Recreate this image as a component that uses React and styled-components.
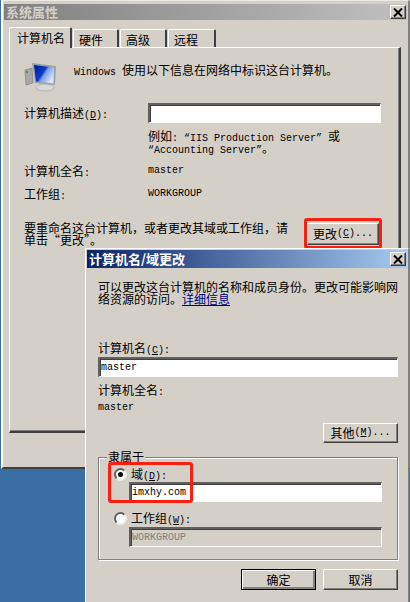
import React from 'react'
import styled, { createGlobalStyle } from 'styled-components'

const GlobalStyle = createGlobalStyle`
  html, body { margin: 0; padding: 0; background: #3a6ea5; }
  * { box-sizing: border-box; }
`

const Desktop = styled.div`
  position: relative;
  width: 410px;
  height: 602px;
  overflow: hidden;
  background: #3a6ea5;
  color: #000;
  font-family: "Noto Sans CJK SC", "Liberation Sans", sans-serif;
  font-size: 12px;
  line-height: 12px;
`

const Latin = styled.span`
  font-family: "Liberation Mono", monospace;
  font-size: 10px;
  line-height: 0;
  white-space: pre;
`

const SystemWindow = styled.div`
  position: absolute;
  left: 1px;
  top: 0;
  width: 409px;
  height: 469px;
  padding: 3px 1px 0;
  background: #d4d0c8;
  border-style: solid;
  border-width: 1px 2px 2px;
  border-color: #ece9e2 #808080 #404040 #fff;
`

const ChangeDialog = styled.div`
  position: absolute;
  left: 85px;
  top: 248px;
  width: 324px;
  height: 360px;
  padding: 1px 1px 0;
  background: #d4d0c8;
  border-style: solid;
  border-width: 1px;
  border-color: #fff #808080 #404040 #fff;
`

const TitleBar = styled.div`
  display: flex;
  align-items: center;
  justify-content: space-between;
  height: ${({ $active }) => ($active ? '18px' : '16px')};
  padding: 0 1px 0 2px;
  background: ${({ $active }) =>
    $active
      ? 'linear-gradient(to right, #0a246a, #a6caf0)'
      : 'linear-gradient(to right, #808080, #c0c0c0)'};
  color: ${({ $active }) => ($active ? '#fff' : '#d4d0c8')};
  font-size: 13px;
  font-weight: 700;
`

const CloseButton = styled.div`
  display: flex;
  align-items: center;
  justify-content: center;
  width: 16px;
  height: 14px;
  background: #d4d0c8;
  border-style: solid;
  border-width: 1px;
  border-color: #fff #404040 #404040 #fff;
  box-shadow: inset -1px -1px 0 #808080;
`

const TabBar = styled.div`
  display: flex;
  align-items: flex-end;
  gap: 1px;
  height: 20px;
  margin: 7px 0 0 5px;
`

const Tab = styled.div`
  position: relative;
  z-index: ${({ $selected }) => ($selected ? 1 : 0)};
  width: ${({ $width }) => $width}px;
  height: ${({ $selected }) => ($selected ? '21px' : '18px')};
  margin-bottom: ${({ $selected }) => ($selected ? '-1px' : '0')};
  padding: ${({ $selected }) => ($selected ? '4px 0 0 7px' : '4px 0 0 5px')};
  background: #d4d0c8;
  border-style: solid;
  border-width: 1px 2px 0 1px;
  border-color: #fff #404040 #d4d0c8 #fff;
  border-radius: 2px 2px 0 0;
`

const TabPanel = styled.div`
  height: 386px;
  margin-left: 5px;
  width: 392px;
  padding-left: 14px;
  border-style: solid;
  border-width: 1px 2px 2px 1px;
  border-color: #fff #404040 #404040 #fff;
  box-shadow: inset -1px -1px 0 #808080;
`

const IntroRow = styled.div`
  display: flex;
  align-items: flex-start;
  margin-top: 13px;
  height: 30px;
`

const IntroText = styled.div`
  margin: 3px 0 0 17px;
  white-space: nowrap;
`

const FieldRow = styled.div`
  display: grid;
  grid-template-columns: 124px 1fr;
  align-items: center;
  margin-top: ${({ $top }) => $top}px;
  min-height: 12px;
  white-space: nowrap;
`

const Hint = styled.div`
  margin: 7px 0 0 124px;
  white-space: nowrap;
`

const RenameRow = styled.div`
  display: flex;
  align-items: flex-start;
  margin-top: 22px;
`

const RenameText = styled.div`
  width: 270px;
  margin-right: 13px;
  font-feature-settings: "fwid";
`

const TextInput = styled.div`
  width: ${({ $width }) => $width}px;
  height: 20px;
  margin: ${({ $margin }) => $margin || 0};
  padding-left: 1px;
  display: flex;
  align-items: center;
  background: ${({ $disabled }) => ($disabled ? '#d4d0c8' : '#fff')};
  color: ${({ $disabled }) => ($disabled ? '#808080' : '#000')};
  border-style: solid;
  border-width: 2px 1px 1px 2px;
  border-color: #606060 #fff #fff #606060;
  box-shadow: inset 1px 1px 0 #404040;
`

const PushButton = styled.div`
  display: flex;
  align-items: center;
  justify-content: center;
  width: ${({ $width }) => $width}px;
  height: ${({ $height }) => $height}px;
  margin-top: ${({ $top }) => $top || 0}px;
  background: #d4d0c8;
  white-space: nowrap;
  border-style: solid;
  border-width: 1px;
  border-color: ${({ $default }) => ($default ? '#000' : '#fff #404040 #404040 #fff')};
  box-shadow: ${({ $default }) =>
    $default
      ? 'inset 1px 1px 0 #fff, inset -2px -2px 0 #808080, inset -1px -1px 0 #404040'
      : 'inset -1px -1px 0 #808080'};
`

const DialogBody = styled.div`
  width: 300px;
  margin-left: 11px;
`

const Intro = styled.p`
  margin: 13px 0 37px;
  width: 302px;
`

const HelpLink = styled.a`
  color: #000080;
  text-decoration: underline;
`

const Line = styled.div`
  margin-top: ${({ $top }) => $top || 0}px;
  height: 12px;
  white-space: nowrap;
`

const ButtonRow = styled.div`
  display: flex;
  justify-content: flex-end;
  gap: ${({ $gap }) => $gap || 0}px;
  margin-top: ${({ $top }) => $top}px;
`

const GroupBox = styled.div`
  position: relative;
  height: 103px;
  margin-top: 14px;
  padding: 10px 0 0 15px;
  border: 1px solid #808080;
  box-shadow: 1px 1px 0 #fff, inset 1px 1px 0 #fff;
`

const GroupLegend = styled.div`
  position: absolute;
  left: 8px;
  top: -7px;
  padding: 0 1px;
  background: #d4d0c8;
`

const RadioRow = styled.div`
  display: flex;
  align-items: center;
  gap: 4px;
  height: 12px;
  margin-top: ${({ $top }) => $top || 0}px;
  white-space: nowrap;
`

const RadioCircle = styled.div`
  display: flex;
  align-items: center;
  justify-content: center;
  width: 13px;
  height: 13px;
  flex: none;
  background: #fff;
  border-radius: 50%;
  border-style: solid;
  border-width: 2px;
  border-color: #606060 #f0eee9 #f0eee9 #606060;
`

const RadioDot = styled.div`
  width: 5px;
  height: 5px;
  background: #000;
  border-radius: 50%;
`

const Highlight = styled.div`
  position: absolute;
  left: ${({ $x }) => $x}px;
  top: ${({ $y }) => $y}px;
  width: ${({ $w }) => $w}px;
  height: ${({ $h }) => $h}px;
  border: 3px solid #fb1f10;
  border-radius: 3px;
`

const CloseIcon = () => (
  <svg width="10" height="9" viewBox="0 0 10 9">
    <path d="M1 0.5 L9 8.5 M9 0.5 L1 8.5" stroke="#000" strokeWidth="2" fill="none" />
  </svg>
)

const ComputerIcon = () => (
  <svg width="33" height="31" viewBox="0 0 33 31">
    <defs>
      <linearGradient id="screen" x1="0" y1="0" x2="1" y2="0.6">
        <stop offset="0" stopColor="#001a9c" />
        <stop offset="0.5" stopColor="#0a38c8" />
        <stop offset="0.62" stopColor="#7d9fe8" />
        <stop offset="1" stopColor="#d8e4f8" />
      </linearGradient>
    </defs>
    <path d="M1 9 L8 7 L9 22 L2 24 Z" fill="#a8a8a8" stroke="#777" strokeWidth="0.6" />
    <rect x="2" y="10" width="2" height="2" fill="#3ea83a" />
    <ellipse cx="21" cy="26.5" rx="9" ry="3.5" fill="#d8d8d8" stroke="#a0a0a0" strokeWidth="0.6" />
    <path d="M8 2 L32 5 L31 24 L11 22 Z" fill="#9aa0aa" />
    <path d="M10 4 L30 6.5 L29.5 22.5 L12 20.5 Z" fill="url(#screen)" />
  </svg>
)

const renameHint = '要重命名这台计算机\uFF0C或者更改其域或工作组\uFF0C请单击\u201C更改\u201D\u3002'

export default function App() {
  return (
    <Desktop>
      <GlobalStyle />

      <SystemWindow>
        <TitleBar>
          <span>系统属性</span>
          <CloseButton><CloseIcon /></CloseButton>
        </TitleBar>

        <TabBar>
          <Tab $selected $width={63}>计算机名</Tab>
          <Tab $width={46}>硬件</Tab>
          <Tab $width={47}>高级</Tab>
          <Tab $width={48}>远程</Tab>
        </TabBar>

        <TabPanel>
          <IntroRow>
            <ComputerIcon />
            <IntroText><Latin>Windows </Latin>使用以下信息在网络中标识这台计算机。</IntroText>
          </IntroRow>

          <FieldRow $top={12}>
            <span>计算机描述<Latin>(<u>D</u>):</Latin></span>
            <TextInput $width={233} />
          </FieldRow>

          <Hint>
            例如<Latin>: “IIS Production Server” </Latin>或<br />
            <Latin>“Accounting Server”</Latin>。
          </Hint>

          <FieldRow $top={11}>
            <span>计算机全名<Latin>:</Latin></span>
            <Latin>master</Latin>
          </FieldRow>

          <FieldRow $top={11}>
            <span>工作组<Latin>:</Latin></span>
            <Latin>WORKGROUP</Latin>
          </FieldRow>

          <RenameRow>
            <RenameText>{renameHint}</RenameText>
            <PushButton $width={72} $height={22} $top={1}>
              更改<Latin>(<u>C</u>)...</Latin>
            </PushButton>
          </RenameRow>
        </TabPanel>
      </SystemWindow>

      <Highlight $x={304} $y={218} $w={78} $h={31} />

      <ChangeDialog>
        <TitleBar $active>
          <span>计算机名/域更改</span>
          <CloseButton><CloseIcon /></CloseButton>
        </TitleBar>

        <DialogBody>
          <Intro>
            可以更改这台计算机的名称和成员身份。更改可能影响网络资源的访问。<HelpLink>详细信息</HelpLink>
          </Intro>

          <Line>计算机名<Latin>(<u>C</u>):</Latin></Line>
          <TextInput $width={300} $margin="3px 0 0"><Latin>master</Latin></TextInput>

          <Line $top={7}>计算机全名<Latin>:</Latin></Line>
          <Line $top={3}><Latin>master</Latin></Line>

          <ButtonRow $top={12}>
            <PushButton $width={75} $height={20}>
              其他<Latin>(<u>M</u>)...</Latin>
            </PushButton>
          </ButtonRow>

          <GroupBox>
            <GroupLegend>隶属于</GroupLegend>

            <RadioRow>
              <RadioCircle><RadioDot /></RadioCircle>
              <span>域<Latin>(<u>D</u>):</Latin></span>
            </RadioRow>
            <TextInput $width={253} $margin="2px 0 0 15px"><Latin>imxhy.com</Latin></TextInput>

            <RadioRow $top={10}>
              <RadioCircle />
              <span>工作组<Latin>(<u>W</u>):</Latin></span>
            </RadioRow>
            <TextInput $disabled $width={253} $margin="3px 0 0 15px"><Latin>WORKGROUP</Latin></TextInput>
          </GroupBox>

          <ButtonRow $top={9} $gap={7}>
            <PushButton $default $width={75} $height={21}>确定</PushButton>
            <PushButton $width={75} $height={21}>取消</PushButton>
          </ButtonRow>
        </DialogBody>
      </ChangeDialog>

      <Highlight $x={108} $y={462} $w={85} $h={41} />
    </Desktop>
  )
}
